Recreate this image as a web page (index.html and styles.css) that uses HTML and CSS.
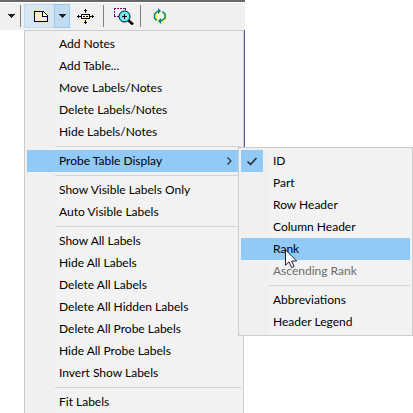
FILE: index.html
```
<!DOCTYPE html>
<html lang="en">
<head>
<meta charset="utf-8">
<title>Labels menu</title>
<link rel="stylesheet" href="styles.css">
</head>
<body>
<div class="window">
  <header class="toolbar">
    <button class="tool more" aria-label="More tools"><svg width="7" height="4" viewBox="0 0 7 4"><path d="M0 0h7v1H6v1H5v1H4v1H3V3H2V2H1V1H0z" fill="#222"/></svg></button>
    <span class="divider"></span>
    <div class="split">
      <button class="tool note" aria-label="Notes"><svg width="14" height="11" viewBox="0 0 14 11" shape-rendering="crispEdges"><path d="M1 1h8v4h4v5H1z" fill="#fff"/><path d="M1 1.500h7M1 3.500h7M1 5.500h12M1 7.500h12M1 9.500h12M2 2.500h6M2 4.500h6M2 6.500h11M2 8.500h11" stroke="#ff0" stroke-dasharray="1 1"/><path d="M9 1h1v1h1v1h1v1h1v1H9z" fill="#fff"/><path d="M0 0h10v1h1v1h1v1h1v1h1v7H0zM1 1v9h12V6H8V1zM9 1v4h4V4h-1V3h-1V2h-1V1z" fill-rule="evenodd"/></svg></button>
      <button class="tool drop" aria-label="Notes menu"><svg width="7" height="4" viewBox="0 0 7 4"><path d="M0 0h7v1H6v1H5v1H4v1H3V3H2V2H1V1H0z" fill="#222"/></svg></button>
    </div>
    <button class="tool move" aria-label="Move label"><svg width="17" height="15" viewBox="0 0 17 15" shape-rendering="crispEdges"><path d="M8 0h1v1h1v1H9v2H8V2H7V1h1zM8 11h1v2h1v1H9v1H8v-1H7v-1h1zM0 7h1V6h1v1h2v1H2v1H1V8H0zM13 7h2V6h1v1h1v1h-1v1h-1V8h-2z"/><path d="M4.500 5.500h8v4h-8z" fill="#ffff80" stroke="#000"/><path d="M6 7h2v1H6zM9 7h2v1H9z"/></svg></button>
    <span class="divider"></span>
    <button class="tool magnify" aria-label="Zoom to area"><svg width="20" height="17" viewBox="0 0 20 17"><path d="M0 .5h12M11.500 0v4M0 8.500h5M.5 0v9" fill="none" stroke="#800080" stroke-dasharray="2 1"/><circle cx="10.500" cy="8.500" r="5.500" fill="#4ff" stroke="#000"/><path d="M8 6.500h1M12 6.500h1M7 8.500h1M13 8.500h1M8 10.500h1M12 10.500h1M10 4.500h1M10 12.500h1" stroke="#dff"/><path d="M8 8.500h5M10.500 6v5" stroke="#000"/><path d="M14.500 12.500l4.500 4" stroke="#000" stroke-width="2.500"/></svg></button>
    <span class="divider"></span>
    <button class="tool refresh" aria-label="Refresh"><svg width="14" height="16" viewBox="0 0 14 16"><g fill="none" stroke="#ff0" stroke-width="1.500"><path d="M5 12.500L3 10.500V6.500L5 5M10 5.500l2.500 1.500v4L9 14"/></g><g fill="none" stroke="#008080" stroke-width="1.500"><path d="M3.500 12.500L1.500 10V6L5 3M9.500 3.500l2.500 2.500v4L8 13"/></g><path d="M5 0l3 3-3 3zM8 10v6l-3-3z" fill="#008080"/></svg></button>
  </header>
  <nav class="menu main">
    <button class="item">Add Notes</button>
    <button class="item">Add Table...</button>
    <button class="item">Move Labels/Notes</button>
    <button class="item">Delete Labels/Notes</button>
    <button class="item">Hide Labels/Notes</button>
    <hr>
    <div class="parent">
      <button class="item active">Probe Table Display<svg class="chevron" width="5" height="8" viewBox="0 0 5 8"><path d="M.5.5L4 4 .5 7.500" fill="none" stroke="#333" stroke-width="1.200"/></svg></button>
      <nav class="menu sub">
        <button class="item"><span class="check"><svg width="12" height="9" viewBox="0 0 12 9"><path d="M1.500 4.500l3 3 6-6.500" fill="none" stroke="#222" stroke-width="1.500"/></svg></span>ID</button>
        <button class="item">Part</button>
        <button class="item">Row Header</button>
        <button class="item">Column Header</button>
        <button class="item active">Rank<svg class="pointer" width="13" height="20" viewBox="0 0 13 20"><path d="M.5.8v15.400l3.600-3.400 2.500 5.800 2.500-1.100-2.500-5.500h5.100z" fill="#fff" stroke="#1c1c30"/></svg></button>
        <button class="item" disabled>Ascending Rank</button>
        <hr>
        <button class="item">Abbreviations</button>
        <button class="item">Header Legend</button>
      </nav>
    </div>
    <hr>
    <button class="item">Show Visible Labels Only</button>
    <button class="item">Auto Visible Labels</button>
    <hr>
    <button class="item">Show All Labels</button>
    <button class="item">Hide All Labels</button>
    <button class="item">Delete All Labels</button>
    <button class="item">Delete All Hidden Labels</button>
    <button class="item">Delete All Probe Labels</button>
    <button class="item">Hide All Probe Labels</button>
    <button class="item">Invert Show Labels</button>
    <hr>
    <button class="item">Fit Labels</button>
  </nav>
</div>
</body>
</html>
```
FILE: styles.css
```
body {
  margin: 0;
  overflow: hidden;
  background: #fff;
  color: #000;
  font: 12px/22px Lato, "Open Sans", sans-serif;
}

button {
  border: 0;
  padding: 0;
  background: none;
  color: inherit;
  font: inherit;
}

.window {
  width: fit-content;
}

/* Toolbar */
.toolbar {
  box-sizing: border-box;
  display: flex;
  align-items: center;
  height: 30px;
  padding-left: 2px;
  border-top: 2px solid #6c6868;
  background: #f0f0f0;
  box-shadow: inset 0 1px #fff;
}

.tool {
  box-sizing: border-box;
  display: flex;
  align-items: center;
  justify-content: center;
  height: 24px;
}

.more {
  width: 18px;
}

.divider {
  width: 1px;
  height: 22px;
  background: #808080;
}

.split {
  display: flex;
  margin-left: 3px;
}

.note {
  width: 30px;
  border: 1px solid #c0dcf3;
  border-right: 0;
  padding-left: 2px;
  background: #d8e6f2;
}

.drop {
  width: 16px;
  border: 1px solid #99c9ef;
  background: #bfdcf3;
}

.move {
  width: 33px;
  padding-right: 2px;
}

.magnify {
  width: 36px;
  padding-left: 4px;
}

.refresh {
  width: 37px;
}

/* Menus */
.menu {
  box-sizing: border-box;
  border: 1px solid #ccc;
  padding: 2px;
  background: linear-gradient(to right, #f0f0f0 30px, #f2f2f2 30px);
}

.main {
  position: relative;
  width: 220px;
  margin: 0 1px 0 24px;
}

/* Edge of the window behind the menu */
.main::after {
  content: "";
  position: absolute;
  top: -1px;
  right: -2px;
  width: 1px;
  height: 117px;
  background: #5c5c9c;
}

.item {
  display: block;
  position: relative;
  width: 100%;
  height: 22px;
  padding: 0 0 0 32px;
  text-align: left;
}

.item:disabled {
  color: #6d6d6d;
}

.active {
  background: #91c9f7;
}

hr {
  height: 1px;
  margin: 3px 0 3px 28px;
  border: 0;
  background: #d4d4d4;
}

.parent {
  position: relative;
}

.chevron {
  position: absolute;
  top: 7px;
  right: 9px;
}

.sub {
  position: absolute;
  top: -3px;
  left: 211px;
  width: 175px;
}

.check {
  position: absolute;
  top: 0;
  left: 0;
  display: grid;
  place-items: center;
  width: 22px;
  height: 22px;
  background: #91c9f7;
}

.pointer {
  position: absolute;
  top: 11px;
  left: 44px;
  z-index: 1;
}
```
